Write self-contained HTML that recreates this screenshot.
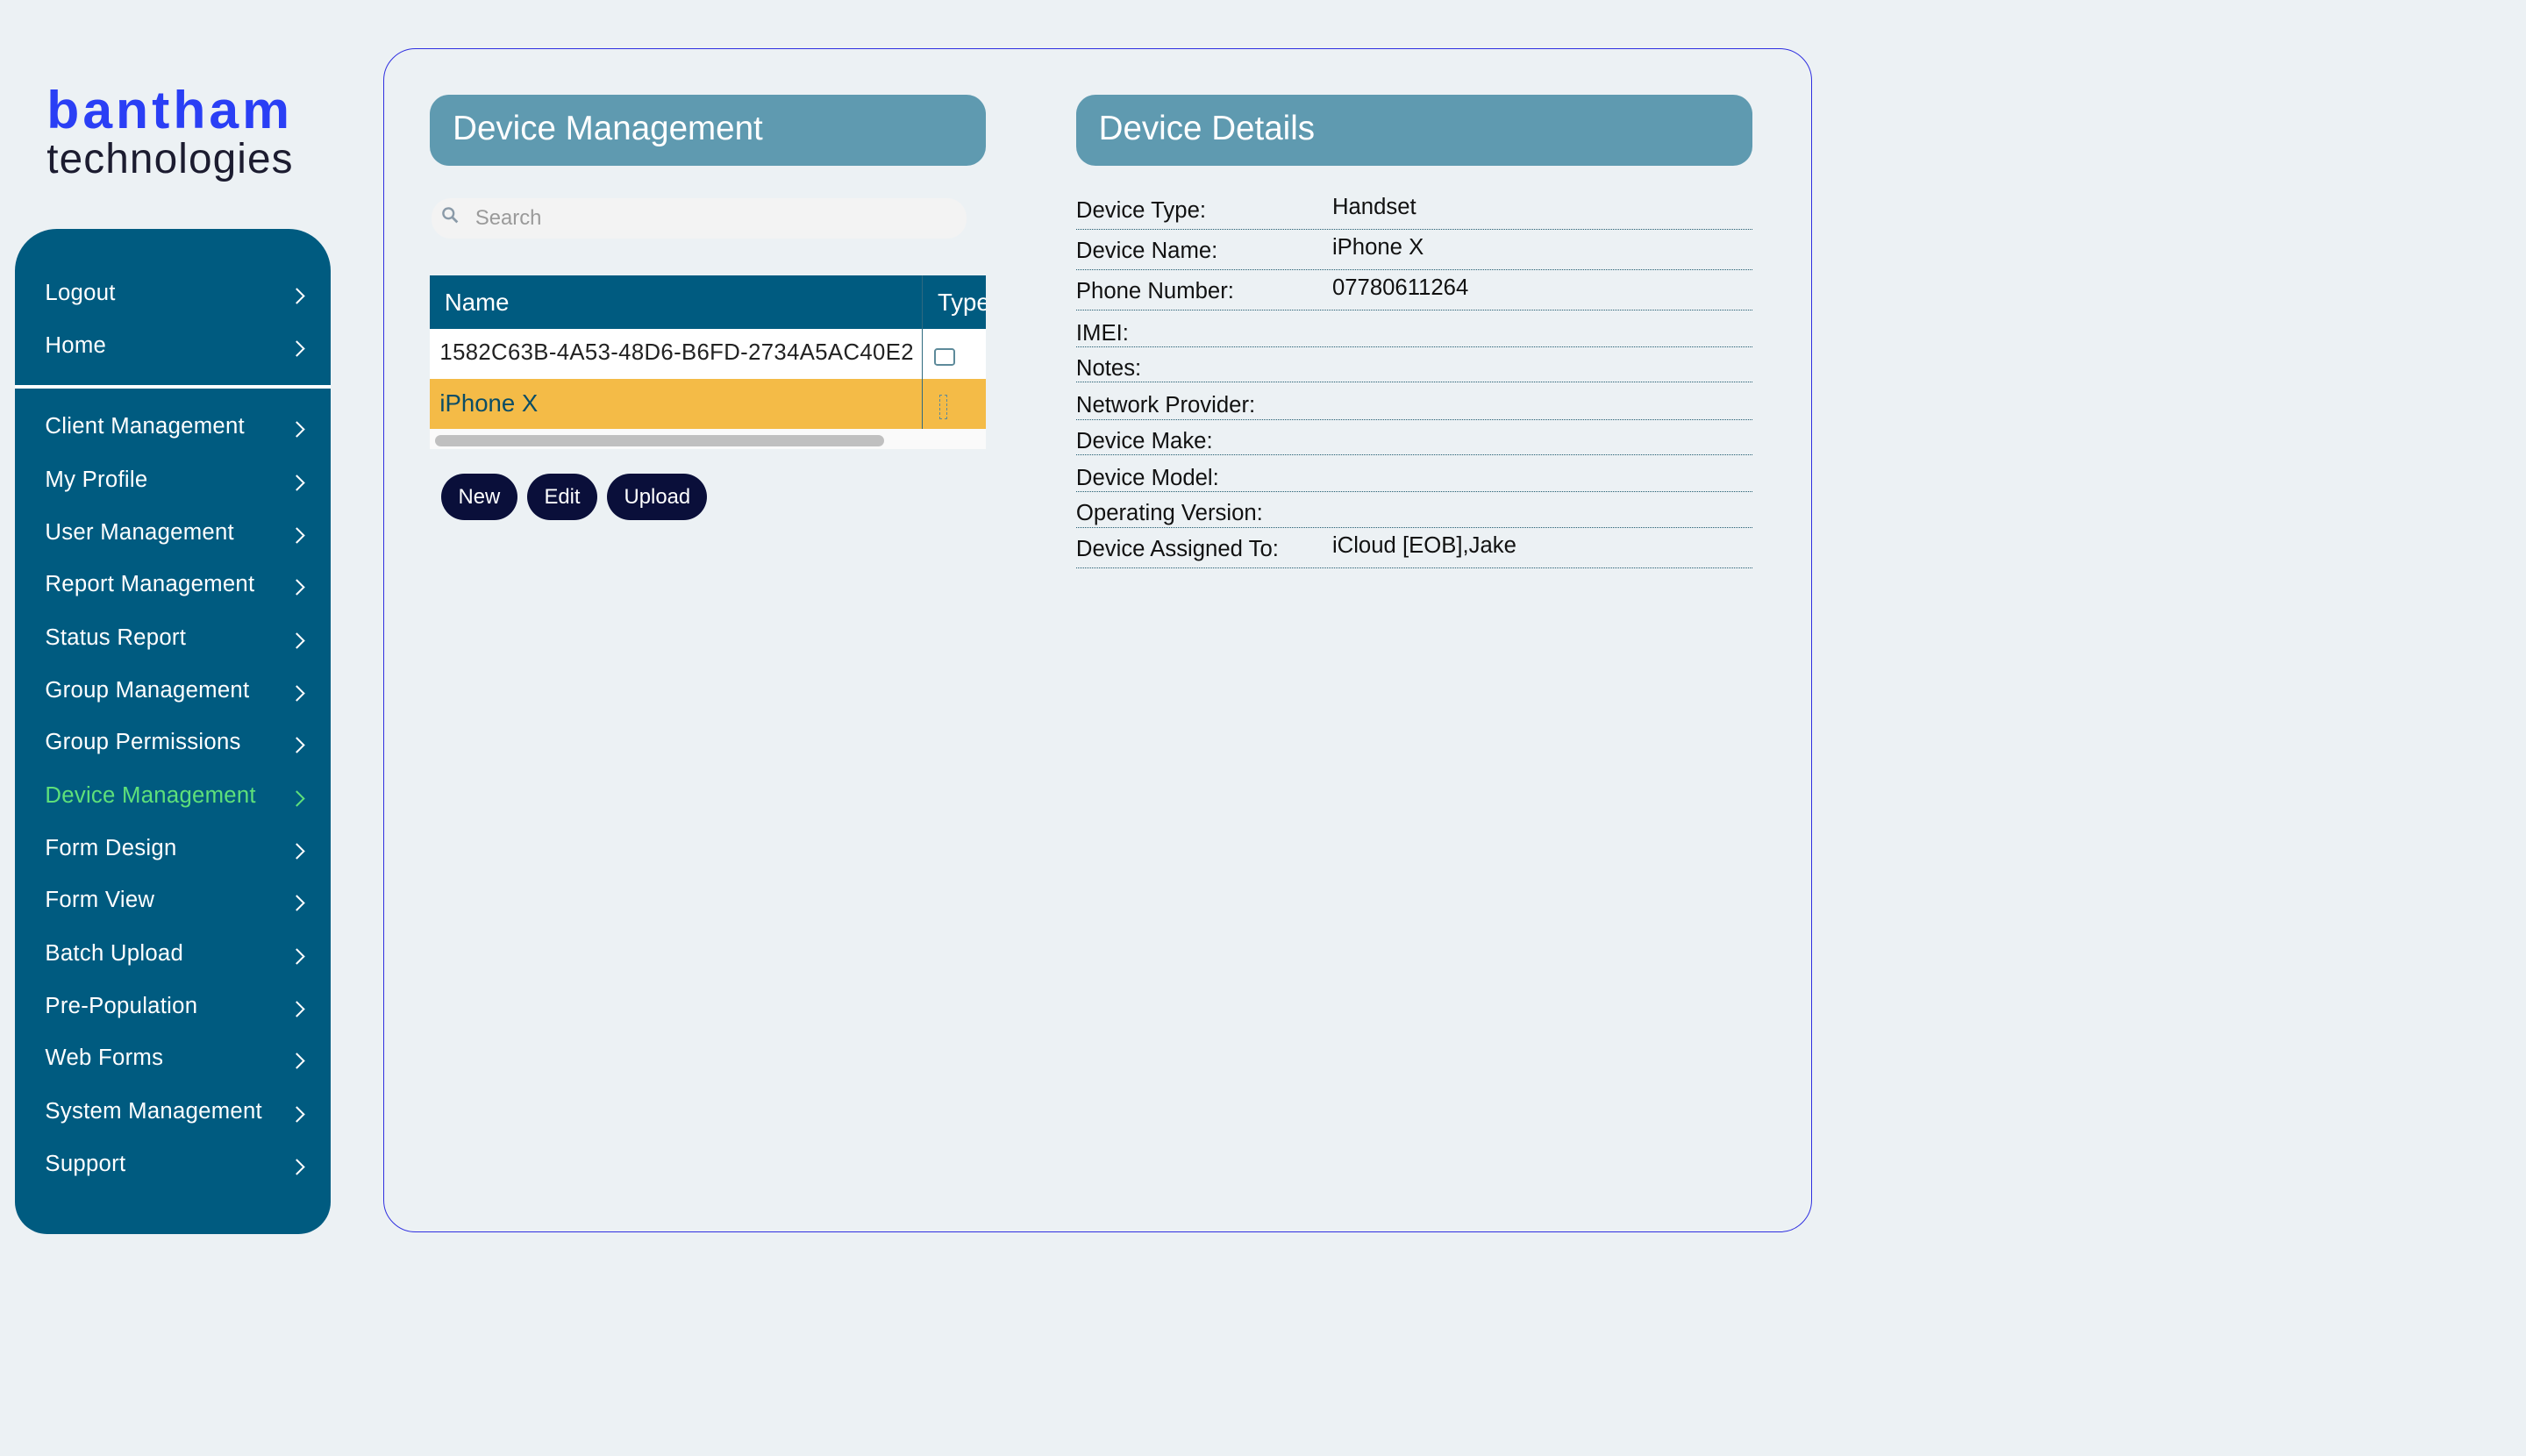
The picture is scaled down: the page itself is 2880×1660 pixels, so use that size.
<!DOCTYPE html>
<html><head><meta charset="utf-8"><style>
html,body{margin:0;padding:0;}
body{width:2880px;height:1660px;background:#ecf1f4;overflow:hidden;font-family:"Liberation Sans",sans-serif;}
#w{position:absolute;left:0;top:0;width:1568px;height:904px;zoom:1.8367;}
.a{position:absolute;}
.side{left:9px;top:142px;width:196px;height:624px;background:#005b80;border-radius:26px 26px 20px 20px;}
.it{position:absolute;left:19px;color:#fff;font-size:14px;white-space:nowrap;letter-spacing:0.15px;}
.ch{position:absolute;left:172px;width:6px;height:6px;border-right:1.6px solid #fff;border-top:1.6px solid #fff;transform:rotate(45deg);}
.hd{background:#5f9ab0;border-radius:12px;color:#fff;font-size:21px;height:44px;line-height:42px;padding-left:14px;box-sizing:border-box;}
.row{position:absolute;left:668px;width:420px;border-bottom:1px dotted #1f5a6e;font-size:14px;color:#111;}
.row span{position:absolute;left:159px;}
.btn{position:absolute;top:294px;height:29px;background:#0a0f3a;color:#fff;font-size:13px;line-height:29px;text-align:center;border-radius:15px;}
</style></head><body><div id="w">
<div class="a" style="left:29px;top:49px;font-size:33px;font-weight:bold;color:#2a3ff5;letter-spacing:2.2px">bantham</div>
<div class="a" style="left:29px;top:84px;font-size:26px;color:#1c1c30;letter-spacing:0.6px">technologies</div>
<div class="a side">
<div class="a" style="left:0;top:97px;width:196px;height:2px;background:#fff"></div>
<div class="it" style="top:32px">Logout</div><div class="ch" style="top:38px"></div>
<div class="it" style="top:65px">Home</div><div class="ch" style="top:71px"></div>
<div class="it" style="top:115px">Client Management</div><div class="ch" style="top:121px"></div>
<div class="it" style="top:148px">My Profile</div><div class="ch" style="top:154px"></div>
<div class="it" style="top:181px">User Management</div><div class="ch" style="top:187px"></div>
<div class="it" style="top:213px">Report Management</div><div class="ch" style="top:219px"></div>
<div class="it" style="top:246px">Status Report</div><div class="ch" style="top:252px"></div>
<div class="it" style="top:279px">Group Management</div><div class="ch" style="top:285px"></div>
<div class="it" style="top:311px">Group Permissions</div><div class="ch" style="top:317px"></div>
<div class="it" style="top:344px;color:#5ee07a">Device Management</div><div class="ch" style="top:350px;border-color:#5ee07a"></div>
<div class="it" style="top:377px">Form Design</div><div class="ch" style="top:383px"></div>
<div class="it" style="top:409px">Form View</div><div class="ch" style="top:415px"></div>
<div class="it" style="top:442px">Batch Upload</div><div class="ch" style="top:448px"></div>
<div class="it" style="top:475px">Pre-Population</div><div class="ch" style="top:481px"></div>
<div class="it" style="top:507px">Web Forms</div><div class="ch" style="top:513px"></div>
<div class="it" style="top:540px">System Management</div><div class="ch" style="top:546px"></div>
<div class="it" style="top:573px">Support</div><div class="ch" style="top:579px"></div>
</div>
<div class="a" style="left:238px;top:30px;width:886px;height:734px;border:1px solid #2f2fe0;border-radius:20px"></div>
<div class="a hd" style="left:267px;top:59px;width:345px">Device Management</div>
<div class="a hd" style="left:668px;top:59px;width:420px">Device Details</div>
<div class="a" style="left:268px;top:123px;width:332px;height:25px;background:#f3f3f3;border-radius:12px"></div>
<svg class="a" style="left:274px;top:128px" width="12" height="12"><circle cx="4.5" cy="4.5" r="3.2" fill="none" stroke="#8a9aa8" stroke-width="1.3"/><path d="M7 7l3 3" stroke="#8a9aa8" stroke-width="1.5"/></svg>
<div class="a" style="left:295px;top:128px;font-size:13px;color:#9a9a9a">Search</div>
<div class="a" style="left:267px;top:171px;width:345px;height:108px;background:#fafafa;overflow:hidden">
<div class="a" style="left:0;top:0;width:345px;height:33px;background:#005b80"></div>
<div class="a" style="left:9px;top:8px;color:#fff;font-size:15px">Name</div>
<div class="a" style="left:315px;top:8px;color:#fff;font-size:15px">Type</div>
<div class="a" style="left:0;top:33px;width:345px;height:31px;background:#fff"></div>
<div class="a" style="left:6px;top:40px;font-size:14px;color:#222;letter-spacing:0.2px">1582C63B-4A53-48D6-B6FD-2734A5AC40E2</div>
<div class="a" style="left:313px;top:45px;width:11px;height:9px;border:1.3px solid #5d8a9a;border-radius:2px"></div>
<div class="a" style="left:0;top:64px;width:345px;height:31px;background:#f4bb47"></div>
<div class="a" style="left:6px;top:71px;font-size:15px;color:#0a4d66">iPhone X</div>
<div class="a" style="left:316px;top:74px;width:4px;height:14px;border:1px dashed #5d8a9a"></div>
<div class="a" style="left:305px;top:0;width:1px;height:95px;background:#2f6a80"></div>
<div class="a" style="left:3px;top:99px;width:279px;height:7px;background:#c0c0c0;border-radius:4px"></div>
</div>
<div class="btn" style="left:274px;width:47px">New</div>
<div class="btn" style="left:327px;width:44px">Edit</div>
<div class="btn" style="left:377px;width:62px">Upload</div>
<div class="row" style="top:123px;height:19px">Device Type:<span style="top:-2px">Handset</span></div>
<div class="row" style="top:148px;height:19px">Device Name:<span style="top:-2px">iPhone X</span></div>
<div class="row" style="top:173px;height:19px">Phone Number:<span style="top:-2px">07780611264</span></div>
<div class="row" style="top:199px;height:16px">IMEI:</div>
<div class="row" style="top:221px;height:16px">Notes:</div>
<div class="row" style="top:244px;height:16px">Network Provider:</div>
<div class="row" style="top:266px;height:16px">Device Make:</div>
<div class="row" style="top:289px;height:16px">Device Model:</div>
<div class="row" style="top:311px;height:16px">Operating Version:</div>
<div class="row" style="top:333px;height:19px">Device Assigned To:<span style="top:-2px">iCloud [EOB],Jake</span></div>
</div></body></html>
